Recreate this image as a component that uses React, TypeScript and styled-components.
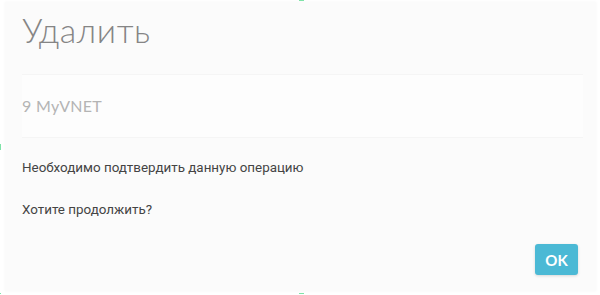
import React from 'react';
import styled, { createGlobalStyle } from 'styled-components';

const GlobalStyle = createGlobalStyle`
  html, body {
    margin: 0;
    padding: 0;
    background: #ffffff;
  }
  body {
    width: 600px;
    height: 295px;
    overflow: hidden;
  }
`

const Stage = styled.div`
  position: relative;
  width: 600px;
  height: 295px;
  padding: 2px 4px 4px 5px;
  box-sizing: border-box;
`

const Dialog = styled.div`
  height: 100%;
  background: #fbfbfb;
  box-shadow: 0 0 3px rgba(0, 0, 0, 0.04);
  padding: 6px 13px 16px 17px;
  box-sizing: border-box;
  display: flex;
  flex-direction: column;
`

const Title = styled.h1`
  margin: 0;
  font-family: Lato, "Open Sans", sans-serif;
  font-weight: 300;
  font-size: 34px;
  line-height: 44px;
  color: #858585;
  letter-spacing: 0.6px;
`

const Field = styled.div`
  margin-top: 22px;
  height: 60px;
  padding-bottom: 2px;
  background: #fdfdfd;
  border-top: 1px solid #f5f5f5;
  border-bottom: 1px solid #f5f5f5;
  display: flex;
  align-items: center;
  font-family: Lato, "Open Sans", sans-serif;
  font-size: 16px;
  letter-spacing: 0.3px;
  color: #b4b4b4;
`

const Message = styled.p<{ gap: number }>`
  margin: ${props => props.gap}px 0 0 0;
  font-family: Roboto, "Liberation Sans", sans-serif;
  font-size: 13.4px;
  line-height: 16px;
  color: #444444;
`

const Footer = styled.div`
  margin-top: auto;
  display: flex;
  justify-content: flex-end;
  padding-right: 5px;
`

const OkButton = styled.button`
  width: 43px;
  height: 31px;
  border: none;
  border-radius: 3px;
  background: #4bb9d5;
  color: #ffffff;
  font-family: Lato, "Open Sans", sans-serif;
  font-weight: 700;
  font-size: 15px;
  box-shadow: 0 1px 3px rgba(0, 0, 0, 0.15);
`

const Handle = styled.span<{ w: number; h: number }>`
  position: absolute;
  width: ${props => props.w}px;
  height: ${props => props.h}px;
  background: #7fe3a8;
`

const App: React.FC = () => {
  return (
    <Stage>
      <GlobalStyle />
      <Dialog>
        <Title>Удалить</Title>
        <Field>9 MyVNET</Field>
        <Message gap={22}>Необходимо подтвердить данную операцию</Message>
        <Message gap={26}>Хотите продолжить?</Message>
        <Footer>
          <OkButton>OK</OkButton>
        </Footer>
      </Dialog>
      <Handle w={5} h={1} style={{ left: 299, top: 0 }} />
      <Handle w={1} h={6} style={{ left: 0, top: 144 }} />
      <Handle w={5} h={1} style={{ left: 299, top: 293 }} />
      <Handle w={1} h={1} style={{ left: 0, top: 293 }} />
    </Stage>
  )
}

export default App;
